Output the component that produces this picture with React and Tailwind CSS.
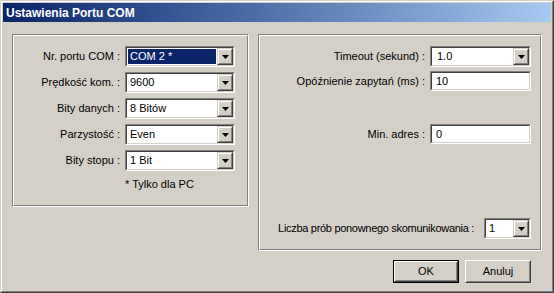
import React from "react";

// Sunken 3D frame used by combo boxes and edit fields
const Sunken = ({ className = "", children }) => (
  <div className={`border border-t-[#808080] border-l-[#808080] border-r-white border-b-white ${className}`}>
    <div className="h-full border border-t-[#404040] border-l-[#404040] border-r-[#d4d0c8] border-b-[#d4d0c8] bg-white flex">
      {children}
    </div>
  </div>
);

// Etched group frame
const Etched = ({ className = "", children }) => (
  <div className={`border border-t-[#808080] border-l-[#808080] border-r-white border-b-white ${className}`}>
    <div className="h-full border border-t-white border-l-white border-r-[#808080] border-b-[#808080]">
      {children}
    </div>
  </div>
);

const ArrowButton = () => (
  <div className="w-[16px] h-full border border-t-[#d4d0c8] border-l-[#d4d0c8] border-r-[#404040] border-b-[#404040]">
    <div className="h-full border border-t-white border-l-white border-r-[#808080] border-b-[#808080] bg-[#d4d0c8] flex items-center justify-center">
      <svg width="7" height="4" viewBox="0 0 7 4">
        <path d="M0 0h7L3.5 4z" fill="#000" />
      </svg>
    </div>
  </div>
);

const Combo = ({ value, width, selected, pad = "pl-[2px]" }) => (
  <Sunken className={`${width} h-[21px]`}>
    <div className="flex-1 min-w-0 flex p-px">
      <div className={`flex-1 flex items-center ${pad} ${selected ? "bg-[#0a246a] text-white" : ""}`}>{value}</div>
    </div>
    <ArrowButton />
  </Sunken>
);

const Edit = ({ value }) => (
  <Sunken className="w-[101px] h-[20px]">
    <div className="flex-1 flex items-center pl-[4px]">{value}</div>
  </Sunken>
);

const Button = ({ label, isDefault }) => (
  <div className={`w-[66px] h-[23px] ${isDefault ? "border border-black" : ""}`}>
    <div className="h-full border border-t-white border-l-white border-r-[#404040] border-b-[#404040]">
      <div className="h-full border border-t-[#d4d0c8] border-l-[#d4d0c8] border-r-[#808080] border-b-[#808080] flex items-center justify-center">
        {label}
      </div>
    </div>
  </div>
);

export default function App() {
  const leftRows = [
    { label: "Nr. portu COM :", value: "COM 2 *", selected: true },
    { label: "Prędkość kom. :", value: "9600" },
    { label: "Bity danych :", value: "8 Bitów" },
    { label: "Parzystość :", value: "Even" },
    { label: "Bity stopu :", value: "1 Bit" },
  ];

  return (
    <div
      className="w-[554px] h-[293px] bg-[#d4d0c8] text-black text-[11px] leading-[13px] border border-t-[#d4d0c8] border-l-[#d4d0c8] border-r-[#404040] border-b-[#404040]"
      style={{ fontFamily: '"Liberation Sans", Arial, sans-serif' }}
    >
      <div className="h-full border border-t-white border-l-white border-r-[#808080] border-b-[#808080] p-px flex flex-col">
        {/* Title bar */}
        <div className="h-[19px] bg-linear-to-r from-[#0a246a] to-[#a6caf0] flex items-center pl-[3px] pt-px text-white text-[12px] font-bold">
          Ustawienia Portu COM
        </div>

        {/* Body */}
        <div className="flex items-start gap-[9px] pt-[12px] pl-[9px]">
          {/* Left group */}
          <Etched className="w-[237px] h-[173px]">
            <div className="pt-[10px] flex flex-col gap-[5px]">
              {leftRows.map((r) => (
                <div key={r.label} className="flex items-center h-[21px]">
                  <div className="w-[106px] text-right">{r.label}</div>
                  <div className="ml-[5px]">
                    <Combo value={r.value} width="w-[110px]" selected={r.selected} />
                  </div>
                </div>
              ))}
            </div>
            <div className="mt-[7px] pl-[111px]">* Tylko dla PC</div>
          </Etched>

          {/* Right column */}
          <div className="w-[284px] flex flex-col">
            <Etched className="h-[217px]">
              <div className="pt-[10px] flex flex-col">
                <div className="flex items-center h-[21px]">
                  <div className="w-[165px] text-right">Timeout (sekund) :</div>
                  <div className="ml-[5px]">
                    <Combo value="1.0" width="w-[101px]" pad="pl-[4px]" />
                  </div>
                </div>
                <div className="flex items-center h-[20px] mt-[4px]">
                  <div className="w-[165px] text-right">Opóźnienie zapytań (ms) :</div>
                  <div className="ml-[5px]">
                    <Edit value="10" />
                  </div>
                </div>
                <div className="flex items-center h-[20px] mt-[33px]">
                  <div className="w-[165px] text-right">Min. adres :</div>
                  <div className="ml-[5px]">
                    <Edit value="0" />
                  </div>
                </div>
                <div className="flex items-center justify-end h-[21px] mt-[74px] pr-[9px]">
                  <div className="tracking-[-0.3px]">Liczba prób ponownego skomunikowania :</div>
                  <div className="ml-[10px]">
                    <Combo value="1" width="w-[47px]" pad="pl-[2px]" />
                  </div>
                </div>
              </div>
            </Etched>

            <div className="flex justify-end gap-[6px] mt-[9px] pr-[11px]">
              <Button label="OK" isDefault />
              <Button label="Anuluj" />
            </div>
          </div>
        </div>
      </div>
    </div>
  );
}
